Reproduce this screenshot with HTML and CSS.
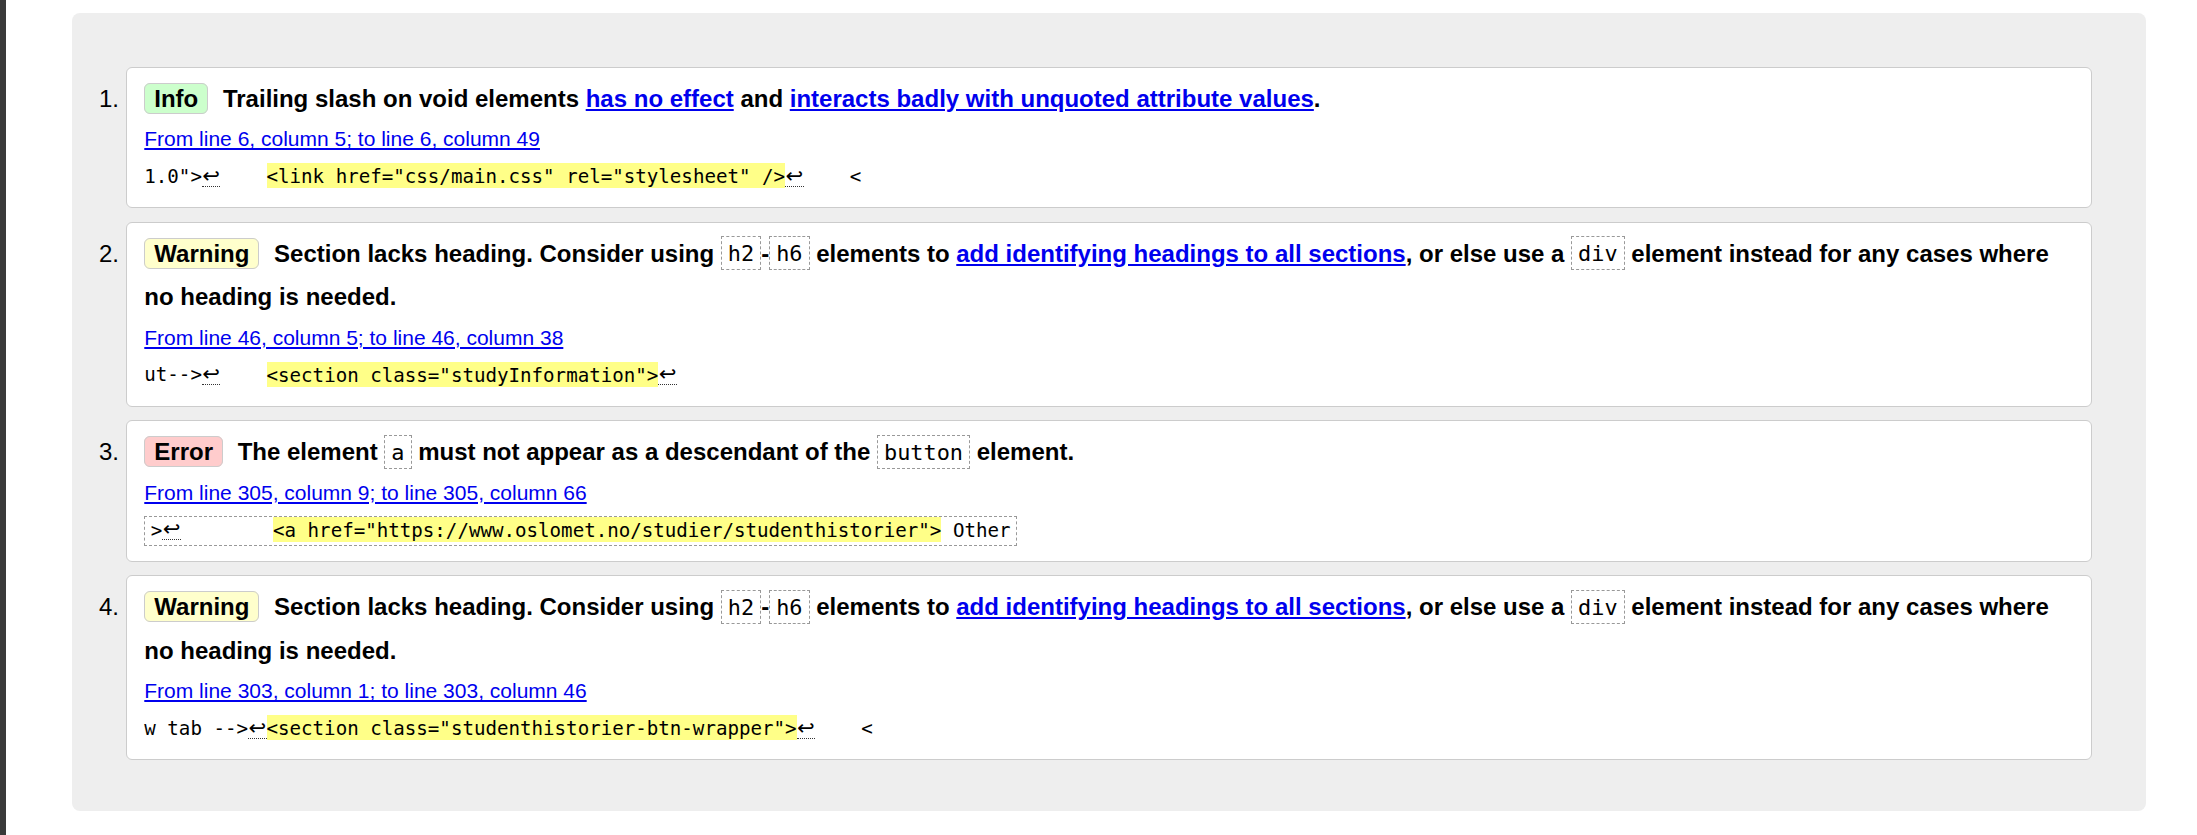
FILE: index.html
```html
<!DOCTYPE html>
<html lang="en">
<head>
<meta charset="utf-8">
<title>Validator messages</title>
<link rel="stylesheet" href="styles.css">
</head>
<body>
<div class="frame">
  <div class="edge"></div>
  <main class="content">
    <div class="results">
      <ol class="messages">
        <li class="info">
          <p class="text"><strong class="badge">Info</strong> Trailing slash on void elements <a href="#">has no effect</a> and <a href="#">interacts badly with unquoted attribute values</a>.</p>
          <p class="location"><a href="#">From line 6, column 5; to line 6, column 49</a></p>
          <p class="extract"><code>1.0"&gt;<span class="lf">↩</span>    <b>&lt;link href="css/main.css" rel="stylesheet" /&gt;</b><span class="lf">↩</span>    &lt;</code></p>
        </li>
        <li class="warning">
          <p class="text"><strong class="badge">Warning</strong> Section lacks heading. Consider using <code>h2</code>-<code>h6</code> elements to <a href="#">add identifying headings to all sections</a>, or else use a <code>div</code> element instead for any cases where no heading is needed.</p>
          <p class="location"><a href="#">From line 46, column 5; to line 46, column 38</a></p>
          <p class="extract"><code>ut--&gt;<span class="lf">↩</span>    <b>&lt;section class="studyInformation"&gt;</b><span class="lf">↩</span></code></p>
        </li>
        <li class="error">
          <p class="text"><strong class="badge">Error</strong> The element <code>a</code> must not appear as a descendant of the <code>button</code> element.</p>
          <p class="location"><a href="#">From line 305, column 9; to line 305, column 66</a></p>
          <p class="extract"><code class="boxed">&gt;<span class="lf">↩</span>        <b>&lt;a href="https://www.oslomet.no/studier/studenthistorier"&gt;</b> Other</code></p>
        </li>
        <li class="warning">
          <p class="text"><strong class="badge">Warning</strong> Section lacks heading. Consider using <code>h2</code>-<code>h6</code> elements to <a href="#">add identifying headings to all sections</a>, or else use a <code>div</code> element instead for any cases where no heading is needed.</p>
          <p class="location"><a href="#">From line 303, column 1; to line 303, column 46</a></p>
          <p class="extract"><code>w tab --&gt;<span class="lf">↩</span><b>&lt;section class="studenthistorier-btn-wrapper"&gt;</b><span class="lf">↩</span>    &lt;</code></p>
        </li>
      </ol>
    </div>
  </main>
</div>
</body>
</html>
```

FILE: styles.css
```css
* { box-sizing: border-box; }

html, body {
  margin: 0;
  padding: 0;
  background: #fff;
}

body {
  font-family: "Liberation Sans", Arial, sans-serif;
  color: #000;
}

.frame {
  display: flex;
  min-height: 100vh;
}

.edge {
  flex: 0 0 5.5px;
  background: #3a3a3a;
}

.content {
  flex: 1;
  padding: 12.7px 51px 0 66.8px;
}

.results {
  background: #eee;
  border-radius: 8px;
  padding: 54px 53.7px 37px 53.4px;
}

.messages {
  margin: 0;
  padding: 0;
  font-size: 24px;
  line-height: 43.5px;
}

.messages > li {
  background: #fff;
  border: 1px solid #ccc;
  border-radius: 6px;
  padding: 8.95px 17.6px 18.3px;
  margin: 0 0 13.4px;
}

.text {
  margin: 0;
  font-weight: bold;
  line-height: 43.5px;
}

.badge {
  padding: 1px 9px;
  border: 1px solid #ccc;
  border-radius: 6px;
  margin-right: 8px;
}

.info .badge { background: #cfc; }
.warning .badge { background: #ffc; }
.error .badge { background: #fcc; }

a { color: #00e; }

.text code {
  font-family: "DejaVu Sans Mono", monospace;
  font-size: 21.9px;
  font-weight: normal;
  line-height: 20px;
  border: 1px dashed #999;
  padding: 4.4px 6px 2.8px;
}

.location {
  margin: 7.28px 0 0;
  font-size: 21px;
  line-height: 24px;
}

.extract {
  margin: 13.6px 0 0;
  font-family: "DejaVu Sans Mono", monospace;
  font-size: 19.15px;
  line-height: 24px;
  white-space: pre;
}

.extract code {
  font: inherit;
}

.extract b {
  font-weight: normal;
  background: #ff8;
  padding: 1.5px 0 0.5px;
}

.extract .boxed {
  border: 1px dashed #999;
  padding: 1.6px 5.5px 4px;
}

.lf {
  display: inline-block;
  width: 18.5px;
  text-align: center;
  font-family: "DejaVu Sans", sans-serif;
  font-size: 21px;
  line-height: 18px;
  border-bottom: 1px dotted #333;
  padding-bottom: 1px;
}
```
